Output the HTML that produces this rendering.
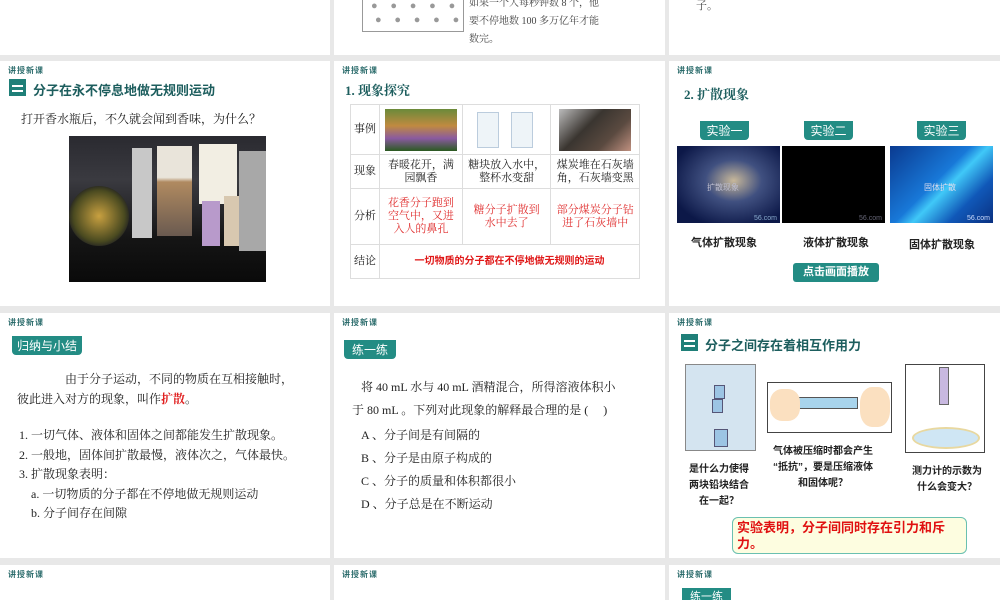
<!DOCTYPE html>
<html><head><meta charset="utf-8"><style>
*{margin:0;padding:0;box-sizing:border-box}
body{width:1000px;height:600px;background:#e8e8e8;position:relative;overflow:hidden;font-family:"Liberation Serif","Noto Serif CJK SC",serif;color:#222}
.p{position:absolute;background:#fff;overflow:hidden}
.a{position:absolute;white-space:nowrap}
.hd{position:absolute;left:8px;top:4px;font:bold 8px "Liberation Sans","Noto Sans CJK SC",sans-serif;color:#2a6b6b;letter-spacing:1px}
.tt{font:bold 13px "Liberation Sans","Noto Sans CJK SC",sans-serif;color:#1d5e5e}
.ic{position:absolute;width:17px;height:17px;background:#1f7f78}
.ic:before{content:"";position:absolute;left:3px;top:6px;width:11px;height:2px;background:#fff}
.ic:after{content:"";position:absolute;left:3px;top:11px;width:11px;height:2px;background:#fff}
.tag{position:absolute;background:#238c84;color:#fff;font:13px "Liberation Sans","Noto Sans CJK SC",sans-serif;padding:1px 5px;border-radius:0 0 4px 4px}
.s{font-family:"Liberation Sans","Noto Sans CJK SC",sans-serif}
td{border:1px solid #ddd;font-size:11px;text-align:center;line-height:13px}
</style></head><body>

<div class="p" style="left:0;top:0;width:330px;height:55px"></div>
<div class="p" style="left:334px;top:0;width:331px;height:55px">
 <div class="a" style="left:28px;top:-6px;width:102px;height:38px;border:1px solid #999;border-top:none;background:#fff">
  <div class="a" style="left:8px;top:6px;font-size:11px;color:#999;letter-spacing:5px">● ● ● ● ●</div>
  <div class="a" style="left:12px;top:20px;font-size:11px;color:#999;letter-spacing:5px">● ● ● ● ●</div>
 </div>
 <div class="a" style="left:135px;top:-5px;font-size:10px;line-height:18px;color:#444">如果一个人每秒钟数 8 个，他<br>要不停地数 100 多万亿年才能<br>数完。</div>
</div>
<div class="p" style="left:669px;top:0;width:331px;height:55px">
 <div class="a" style="left:27px;top:-3px;font-size:11px;color:#444">子。</div>
</div>

<div class="p" style="left:0;top:61px;width:330px;height:245px">
 <div class="hd">讲授新课</div>
 <div class="ic" style="left:9px;top:18px"></div>
 <div class="a tt" style="left:33px;top:19px">分子在永不停息地做无规则运动</div>
 <div class="a" style="left:21px;top:49px;font-size:12px">打开香水瓶后，不久就会闻到香味，为什么？</div>
 <div class="a" style="left:69px;top:75px;width:197px;height:146px;background:linear-gradient(180deg,#2a2a30 0%,#3a3a40 30%,#151515 70%,#0a0a0a 100%)">
  <div class="a" style="left:0;top:50px;width:60px;height:60px;border-radius:50%;background:radial-gradient(circle,#c8a040,#4a4a20 60%,#222 75%)"></div>
  <div class="a" style="left:63px;top:12px;width:20px;height:90px;background:#c8c8c8"></div>
  <div class="a" style="left:88px;top:10px;width:35px;height:90px;background:linear-gradient(#e9e4da 35%,#b08a60 40%,#6a5a50)"></div>
  <div class="a" style="left:130px;top:8px;width:38px;height:60px;background:#f2eee3"></div>
  <div class="a" style="left:133px;top:65px;width:18px;height:45px;background:#b89acb"></div>
  <div class="a" style="left:155px;top:60px;width:20px;height:50px;background:#d8c8b0"></div>
  <div class="a" style="left:170px;top:15px;width:27px;height:100px;background:#a8a8a8"></div>
 </div>
</div>

<div class="p" style="left:334px;top:61px;width:331px;height:245px">
 <div class="hd">讲授新课</div>
 <div class="a" style="left:11px;top:19px;font-size:13px;font-weight:bold;color:#1d5e5e">1. 现象探究</div>
 <table style="position:absolute;left:16px;top:43px;width:290px;height:175px;border-collapse:collapse;border:1px solid #aac">
  <tr style="height:50px"><td style="width:29px">事例</td>
   <td><div style="margin:auto;width:72px;height:42px;background:linear-gradient(#6a8a3a,#c08a40 40%,#8a5aa0 70%,#2a5a20)"></div></td>
   <td><div style="margin:auto;width:72px;height:42px;position:relative"><div class="a" style="left:6px;top:3px;width:22px;height:36px;border:1px solid #bcd;background:#eef4f8"></div><div class="a" style="left:40px;top:3px;width:22px;height:36px;border:1px solid #bcd;background:#eef4f8"></div></div></td>
   <td><div style="margin:auto;width:72px;height:42px;background:linear-gradient(135deg,#bbb,#3a3530 40%,#5a4a40 70%,#c09080)"></div></td></tr>
  <tr style="height:34px"><td>现象</td><td>春暖花开，满<br>园飘香</td><td>糖块放入水中，<br>整杯水变甜</td><td>煤炭堆在石灰墙<br>角，石灰墙变黑</td></tr>
  <tr style="height:55px;color:#e03030"><td style="color:#222">分析</td><td>花香分子跑到<br>空气中，又进<br>入人的鼻孔</td><td>糖分子扩散到<br>水中去了</td><td>部分煤炭分子钻<br>进了石灰墙中</td></tr>
  <tr style="height:34px"><td>结论</td><td colspan="3" class="s" style="color:#e01818;font-weight:bold;font-size:10px">一切物质的分子都在不停地做无规则的运动</td></tr>
 </table>
</div>

<div class="p" style="left:669px;top:61px;width:331px;height:245px">
 <div class="hd">讲授新课</div>
 <div class="a" style="left:15px;top:23px;font-size:13px;font-weight:bold;color:#1d5e5e">2. 扩散现象</div>
 <div class="tag" style="left:31px;top:60px;font-size:12px;width:49px;text-align:center;padding:1px 0">实验一</div>
 <div class="tag" style="left:135px;top:60px;font-size:12px;width:49px;text-align:center;padding:1px 0">实验二</div>
 <div class="tag" style="left:248px;top:60px;font-size:12px;width:49px;text-align:center;padding:1px 0">实验三</div>
 <div class="a" style="left:8px;top:85px;width:103px;height:77px;background:radial-gradient(ellipse at 55% 45%,#c8b89a 0%,#405080 35%,#0c1848 80%)"><div class="a s" style="left:30px;top:36px;font-size:8px;color:#bbc">扩散现象</div><div class="a s" style="right:3px;bottom:1px;font-size:7px;color:#8ac">56.com</div></div>
 <div class="a" style="left:113px;top:85px;width:103px;height:77px;background:#000"><div class="a s" style="right:3px;bottom:1px;font-size:7px;color:#667">56.com</div></div>
 <div class="a" style="left:221px;top:85px;width:103px;height:77px;background:linear-gradient(135deg,#0a3a90,#1878d8 45%,#40c8f8 55%,#1058b8 75%,#0a3080)"><div class="a s" style="left:34px;top:36px;font-size:8px;color:#dde">固体扩散</div><div class="a s" style="right:3px;bottom:1px;font-size:7px;color:#cdf">56.com</div></div>
 <div class="a s" style="left:22px;top:173px;font-size:11px;font-weight:bold">气体扩散现象</div>
 <div class="a s" style="left:134px;top:173px;font-size:11px;font-weight:bold">液体扩散现象</div>
 <div class="a s" style="left:240px;top:175px;font-size:11px;font-weight:bold">固体扩散现象</div>
 <div class="a s" style="left:124px;top:202px;width:86px;height:19px;background:#238c84;color:#fff;font-size:11px;font-weight:bold;text-align:center;line-height:19px;border-radius:3px">点击画面播放</div>
</div>

<div class="p" style="left:0;top:313px;width:330px;height:245px">
 <div class="hd">讲授新课</div>
 <div class="tag" style="left:12px;top:23px;font-size:12px">归纳与小结</div>
 <div class="a" style="left:65px;top:57px;font-size:12px">由于分子运动，不同的物质在互相接触时，</div>
 <div class="a" style="left:17px;top:77px;font-size:12px">彼此进入对方的现象，叫作<b style="color:#e02020">扩散</b>。</div>
 <div class="a" style="left:19px;top:113px;font-size:12px;line-height:19.5px">1. 一切气体、液体和固体之间都能发生扩散现象。<br>2. 一般地，固体间扩散最慢，液体次之，气体最快。<br>3. 扩散现象表明：<br>&nbsp;&nbsp;&nbsp;&nbsp;a. 一切物质的分子都在不停地做无规则运动<br>&nbsp;&nbsp;&nbsp;&nbsp;b. 分子间存在间隙</div>
</div>

<div class="p" style="left:334px;top:313px;width:331px;height:245px">
 <div class="hd">讲授新课</div>
 <div class="tag" style="left:10px;top:27px;font-size:12px;padding:1px 8px">练一练</div>
 <div class="a" style="left:27px;top:65px;font-size:12px">将 40 mL 水与 40 mL 酒精混合，所得溶液体积小</div>
 <div class="a" style="left:18px;top:88px;font-size:12px">于 80 mL 。下列对此现象的解释最合理的是 (&nbsp;&nbsp;&nbsp;&nbsp;&nbsp;)</div>
 <div class="a" style="left:27px;top:111px;font-size:12px;line-height:23px">A 、分子间是有间隔的<br>B 、分子是由原子构成的<br>C 、分子的质量和体积都很小<br>D 、分子总是在不断运动</div>
</div>

<div class="p" style="left:669px;top:313px;width:331px;height:245px">
 <div class="hd">讲授新课</div>
 <div class="ic" style="left:12px;top:21px"></div>
 <div class="a tt" style="left:36px;top:22px">分子之间存在着相互作用力</div>
 <div class="a" style="left:16px;top:51px;width:71px;height:87px;background:#d4e4f0;border:1px solid #888">
  <div class="a" style="left:28px;top:20px;width:11px;height:14px;background:#9cc4e4;border:1px solid #557"></div>
  <div class="a" style="left:26px;top:34px;width:11px;height:14px;background:#9cc4e4;border:1px solid #557"></div>
  <div class="a" style="left:28px;top:64px;width:14px;height:18px;background:#9cc4e4;border:1px solid #557"></div>
 </div>
 <div class="a" style="left:98px;top:69px;width:125px;height:51px;border:1px solid #444;background:#fff">
  <div class="a" style="left:25px;top:14px;width:65px;height:12px;background:#a8d4ec;border:1px solid #555"></div>
  <div class="a" style="left:2px;top:6px;width:30px;height:32px;background:#fbe0c0;border-radius:40%"></div>
  <div class="a" style="left:92px;top:4px;width:30px;height:40px;background:#fbe0c0;border-radius:40%"></div>
 </div>
 <div class="a" style="left:236px;top:51px;width:80px;height:89px;border:1px solid #444">
  <div class="a" style="left:33px;top:2px;width:10px;height:38px;background:#c8b8e0;border:1px solid #666"></div>
  <div class="a" style="left:6px;top:62px;width:68px;height:22px;border-radius:50%;background:#cfe6f4;border:2px solid #e8d8a0"></div>
 </div>
 <div class="a s" style="left:20px;top:149px;font-size:10px;font-weight:bold;line-height:16px;text-align:center">是什么力使得<br>两块铅块结合<br>在一起？</div>
 <div class="a s" style="left:104px;top:131px;font-size:10px;font-weight:bold;line-height:16px;text-align:center">气体被压缩时都会产生<br>“抵抗”，要是压缩液体<br>和固体呢？</div>
 <div class="a s" style="left:243px;top:151px;font-size:10px;font-weight:bold;line-height:16px;text-align:center">测力计的示数为<br>什么会变大？</div>
 <div class="a s" style="left:63px;top:204px;width:235px;height:37px;background:#fdfde0;border:1px solid #6ac0b0;border-radius:6px;color:#e01010;font-size:13px;font-weight:bold;padding:2px 4px;line-height:16px;white-space:normal">实验表明，分子间同时存在引力和斥力。</div>
</div>

<div class="p" style="left:0;top:565px;width:330px;height:35px"><div class="hd">讲授新课</div></div>
<div class="p" style="left:334px;top:565px;width:331px;height:35px"><div class="hd">讲授新课</div></div>
<div class="p" style="left:669px;top:565px;width:331px;height:35px"><div class="hd">讲授新课</div>
 <div class="tag" style="left:13px;top:23px;font-size:11px;padding:0 8px">练一练</div></div>
</body></html>
